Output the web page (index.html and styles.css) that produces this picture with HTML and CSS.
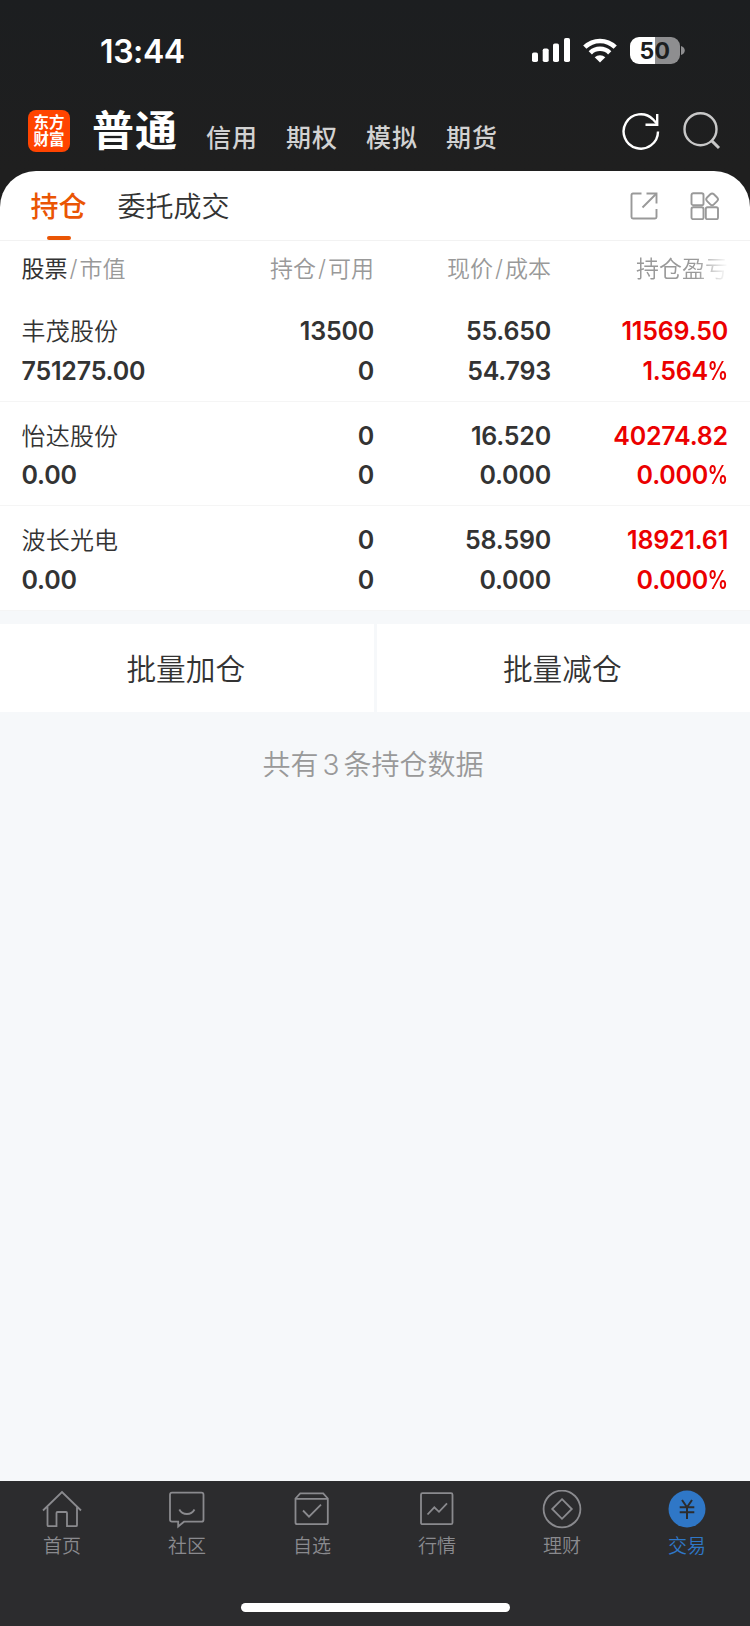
FILE: index.html
```html
<!DOCTYPE html>
<html lang="zh-CN">
  <head>
    <meta charset="UTF-8" />
    <meta name="viewport" content="width=device-width, initial-scale=1.0" />
    <title>持仓</title>
    <link rel="stylesheet" href="styles.css">
  </head>
  <body>
    <header class="header">
      <div class="statusBar">
        <span class="time">13:44</span>
        <div class="statusIcons">
          <svg width="38" height="24" viewBox="0 0 38 24" fill="#fff">
            <rect x="0" y="14.5" width="6" height="9.5" rx="1.8" />
            <rect x="10.7" y="10.5" width="6" height="13.5" rx="1.8" />
            <rect x="21" y="5.5" width="6" height="18.5" rx="1.8" />
            <rect x="32" y="0" width="6" height="24" rx="1.8" />
          </svg>
          <svg class="wifi" width="34" height="25" viewBox="0 0 34 25" fill="none" stroke="#fff" stroke-width="4.6">
            <path d="M1.8 9.2a21.6 21.6 0 0 1 30.4 0" />
            <path d="M7.3 14.8a13.8 13.8 0 0 1 19.4 0" />
            <path d="M17 24.6l-5.3-5.3a7.6 7.6 0 0 1 10.6 0z" fill="#fff" stroke="none" />
          </svg>
          <div class="battery"><span>50</span></div>
          <svg class="batteryTip" width="4" height="9" viewBox="0 0 4 9" fill="#8e8e90">
            <path d="M0 0c5 1.2 5 7.8 0 9z" />
          </svg>
        </div>
      </div>
      <nav class="topNav">
        <div class="logo"><span>东方</span><span>财富</span></div>
        <a class="current">普通</a>
        <a>信用</a>
        <a>期权</a>
        <a>模拟</a>
        <a>期货</a>
        <div class="topIcons">
          <svg width="38" height="38" viewBox="0 0 38 38" fill="none" stroke="#fff" stroke-width="2.4">
            <path d="M36 19.5a17.2 17.2 0 1 1-5-12.2l4.200 4.700" />
            <path d="M35.200 2v10.700H23.500" />
          </svg>
          <svg width="38" height="38" viewBox="0 0 38 38" fill="none" stroke="#c8c8c8" stroke-width="2.4">
            <circle cx="17.500" cy="17.200" r="16" />
            <path d="M28.600 28.600l7.400 7.400" stroke-width="3" />
          </svg>
        </div>
      </nav>
    </header>

    <main class="content">
      <div class="panel">
        <div class="tabs">
          <a class="tab active">持仓</a>
          <a class="tab">委托成交</a>
          <div class="tabIcons">
            <svg width="28" height="28" viewBox="0 0 28 28" fill="none" stroke="#999" stroke-width="1.9">
              <path d="M11.500 1.500H3q-1.500 0-1.500 1.500v22q0 1.500 1.500 1.500h22q1.500 0 1.500-1.500v-8" />
              <path d="M16.500 1.500h10v10" />
              <path d="M26 2L12.500 15.500" />
            </svg>
            <svg width="30" height="28" viewBox="0 0 30 28" fill="none" stroke="#999" stroke-width="1.9">
              <rect x="1.5" y="1.2" width="12" height="12" rx="1.8" />
              <rect x="1.5" y="15.2" width="12" height="12" rx="1.8" />
              <rect x="15.8" y="15.2" width="12.2" height="12" rx="1.8" />
              <rect x="17.3" y="2.5" width="9.6" height="9.6" rx="2.5" transform="rotate(45 22.1 7.3)" />
            </svg>
          </div>
        </div>

        <div class="grid tableHead">
          <span><b>股票</b><i>/</i>市值</span>
          <span>持仓<i>/</i>可用</span>
          <span>现价<i>/</i>成本</span>
          <span class="fade">持仓盈亏</span>
        </div>
        <div class="grid row">
          <span class="name">丰茂股份</span><span>13500</span><span>55.650</span><span class="red">11569.50</span>
          <span>751275.00</span><span>0</span><span>54.793</span><span class="red">1.564<small>%</small></span>
        </div>
        <div class="grid row">
          <span class="name">怡达股份</span><span>0</span><span>16.520</span><span class="red">40274.82</span>
          <span>0.00</span><span>0</span><span>0.000</span><span class="red">0.000<small>%</small></span>
        </div>
        <div class="grid row">
          <span class="name">波长光电</span><span>0</span><span>58.590</span><span class="red">18921.61</span>
          <span>0.00</span><span>0</span><span>0.000</span><span class="red">0.000<small>%</small></span>
        </div>
      </div>

      <div class="actions">
        <button>批量加仓</button>
        <button>批量减仓</button>
      </div>
      <p class="total">共有<span>3</span>条持仓数据</p>
    </main>

    <footer class="footer">
      <nav class="tabBar">
        <a>
          <svg width="40" height="40" viewBox="0 0 40 40">
            <path d="M1 20.500L20 2l19 18.500M5.500 17v18.200q0 1 1 1h8V23q0-1 1-1h8.500q1 0 1 1v13.200h9q1 0 1-1V17" />
          </svg>
          首页
        </a>
        <a>
          <svg width="40" height="40" viewBox="0 0 40 40">
            <path d="M5 2.700h29.500q2 0 2 2v25q0 2-2 2H17L11.200 36.500V31.700H5q-2 0-2-2v-25q0-2 2-2z" />
            <path d="M12.300 19.500c3.200 6 12 6 15.200 0" />
          </svg>
          社区
        </a>
        <a>
          <svg width="40" height="40" viewBox="0 0 40 40">
            <path d="M3.500 8.500v24q0 1.700 1.700 1.700h28.900q1.700 0 1.700-1.700v-24l-4.600-5.200H8.200zM3.500 8.800h32.300" />
            <path d="M11 20.500l6 6.200 12-12" />
          </svg>
          自选
        </a>
        <a>
          <svg width="40" height="40" viewBox="0 0 40 40">
            <rect x="4" y="3.2" width="31.5" height="31" rx="1.5" />
            <path d="M10.500 24.500l6.800-7.200 4.700 4.500 8-8.500" />
          </svg>
          行情
        </a>
        <a>
          <svg width="40" height="40" viewBox="0 0 40 40">
            <circle cx="20" cy="19" r="18.4" />
            <path d="M20 9.200l9.800 9.800-9.800 9.800-9.800-9.800z" />
          </svg>
          理财
        </a>
        <a class="selected">
          <svg width="40" height="40" viewBox="0 0 40 40">
            <circle cx="20" cy="19" r="18.5" fill="#2f77c7" stroke="none" />
            <path d="M15 10l5 7.300 5-7.300M12.700 17.300h14.600M12.700 22.300h14.600M20 17v12" stroke="#2c2c2e" stroke-width="2" />
          </svg>
          交易
        </a>
      </nav>
      <div class="homeIndicator"></div>
    </footer>
  </body>
</html>
```
FILE: styles.css
```css
* {
  box-sizing: border-box;
}

body {
  margin: 0;
  height: 1626px;
  display: flex;
  flex-direction: column;
  overflow: hidden;
  background: #f6f8fa;
  color: #333;
  font-family: Inter, "Noto Sans CJK SC", sans-serif;
}

i {
  font-style: normal;
}

.header {
  height: 207px;
  flex: none;
  background: linear-gradient(#1c1e20, #1f1f1f 171px);
}

/* status bar */
.statusBar {
  display: flex;
  justify-content: space-between;
  align-items: center;
  height: 100px;
  padding: 0 65px 0 100px;
}

.time {
  color: #fff;
  font-size: 32px;
  font-weight: 560;
  line-height: 40px;
  letter-spacing: -0.4px;
  margin-top: 3px;
}

.statusIcons {
  display: flex;
  align-items: center;
}

.wifi {
  margin: 0 13px;
}

.battery {
  width: 50px;
  height: 27px;
  border-radius: 9px;
  background: linear-gradient(90deg, #fff 50%, #8e8e90 50%);
  color: #1c1e20;
  font-size: 23px;
  font-weight: 650;
  line-height: 28px;
  letter-spacing: 0.5px;
  text-align: center;
}

.batteryTip {
  margin-left: 1px;
}

/* account types */
.topNav {
  display: flex;
  height: 71px;
  padding: 0 29px 0 28px;
}

.topNav a {
  color: #d2d2d2;
  font-size: 25px;
  font-weight: 500;
  line-height: 36px;
  letter-spacing: 1px;
  margin: 20px 0 0 28px;
}

.topNav .current {
  color: #fff;
  font-size: 42px;
  font-weight: 700;
  line-height: 60px;
  margin: 1px 0 0 22px;
}

.logo {
  display: flex;
  flex-direction: column;
  justify-content: center;
  align-items: center;
  width: 42px;
  height: 42px;
  margin-top: 10px;
  border-radius: 8px;
  background: #ff4400;
  color: #fff;
  font-size: 15.5px;
  font-weight: 700;
  line-height: 17px;
}

.topIcons {
  display: flex;
  gap: 23px;
  margin: 12px 0 0 auto;
}

/* positions */
.content {
  flex: 1;
  margin-top: -36px;
}

.panel {
  background: #fff;
  border-radius: 36px 36px 0 0;
}

.tabs {
  display: flex;
  height: 70px;
  padding: 0 29px 0 30.5px;
  border-bottom: 1px solid #f2f2f2;
}

.tab {
  display: flex;
  flex-direction: column;
  align-items: center;
  font-size: 28px;
  font-weight: 350;
  line-height: 40px;
  padding-top: 16px;
  margin-right: 31px;
}

.tab.active {
  color: #ea5504;
  font-weight: 500;
}

.tab.active::after {
  content: "";
  width: 24px;
  height: 4px;
  margin-top: 9px;
  border-radius: 2px;
  background: #ea5504;
}

.tabIcons {
  display: flex;
  gap: 32px;
  margin: 21px 0 0 auto;
  padding-right: 1px;
}

.grid {
  display: grid;
  grid-template-columns: 200px 152.5px 177px 177px;
  padding: 0 21.5px;
  text-align: right;
}

.grid span:nth-child(4n + 1) {
  text-align: left;
}

.tableHead {
  height: 56px;
  color: #999;
  font-size: 23px;
  line-height: 57px;
  font-weight: 350;
}

.tableHead b {
  color: #333;
  font-weight: 400;
}

.tableHead i {
  margin: 0 2px;
}

.fade {
  -webkit-mask-image: linear-gradient(90deg, #000 82%, transparent);
  mask-image: linear-gradient(90deg, #000 82%, transparent);
}

.row {
  height: 104.7px;
  padding-top: 15px;
  border-bottom: 1px solid #f5f5f5;
  grid-auto-rows: 39.5px;
  font-size: 25px;
  font-weight: 560;
  line-height: 39px;
  letter-spacing: -0.2px;
}

.row .name {
  font-size: 24px;
  font-weight: 350;
  letter-spacing: 0.2px;
}

/* narrow percent sign */
.row small {
  display: inline-block;
  font-size: 25px;
  margin-left: -5px;
  transform: scaleX(0.82);
  transform-origin: right;
}

.red {
  color: #eb0000;
}

.actions {
  display: flex;
  gap: 3px;
  margin-top: 13px;
}

.actions button {
  flex: 1;
  height: 88px;
  padding: 0 2px 2px 0;
  border: none;
  background: #fff;
  color: #333;
  font-family: inherit;
  font-size: 29.7px;
  font-weight: 350;
}

.actions button:first-child {
  flex: none;
  width: 373.5px;
}

.total {
  margin: 33px 0 0;
  padding-right: 4px;
  color: #999;
  font-size: 28px;
  font-weight: 350;
  line-height: 40px;
  text-align: center;
}

.total span {
  margin: 0 4px;
}

/* bottom bar */
.footer {
  height: 145px;
  flex: none;
  background: #2c2c2e;
}

.tabBar {
  display: flex;
  height: 122px;
}

.tabBar a {
  flex: 1;
  display: flex;
  flex-direction: column;
  align-items: center;
  padding-top: 9px;
  color: #8a8a8e;
  font-size: 19px;
  font-weight: 350;
  line-height: 33px;
  padding-right: 1px;
}

.tabBar svg {
  fill: none;
  stroke: #8a8a8e;
  stroke-width: 1.8;
}

.tabBar .selected {
  color: #2f77c7;
}

.homeIndicator {
  width: 269px;
  height: 9px;
  margin: 0 auto;
  border-radius: 5px;
  background: #fff;
}
```
